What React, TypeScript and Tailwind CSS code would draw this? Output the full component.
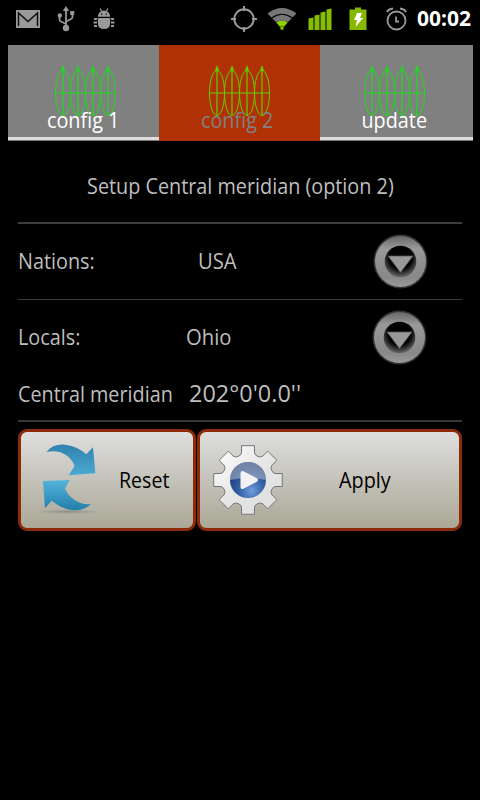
import { ReactNode } from "react";

function MailIcon() {
  return (
    <svg width="24" height="18" viewBox="0 0 24 18" className="ml-4">
      <path d="M0 0h24v18H0z" fill="#999" />
      <path d="M2.5 16V3L12 11.5 21.5 3v13" fill="none" stroke="#111" strokeWidth="1.5" />
    </svg>
  );
}

function UsbIcon() {
  return (
    <svg width="18" height="26" viewBox="0 0 18 26" className="ml-[17px]" fill="none" stroke="#999" strokeWidth="1.8">
      <path d="M9 22V3M9 18l-5-2.500q-1.500-.8-1.500-2V10M9 15.500l5-2.500q1.500-.8 1.500-2V8" />
      <path d="M9 0l3.200 5H5.800z" fill="#999" stroke="none" />
      <circle cx="9" cy="22" r="3.200" fill="#999" stroke="none" />
      <circle cx="2.800" cy="9.500" r="2.200" fill="#999" stroke="none" />
      <path d="M13.200 5h4v4h-4z" fill="#999" stroke="none" />
    </svg>
  );
}

function BugIcon() {
  return (
    <svg width="22" height="22" viewBox="0 0 22 22" className="ml-[18px]" fill="#999">
      <path d="M4.800 8.800a6.200 6.300 0 0 1 12.400 0zM4.800 10h12.400v5q0 6-6.200 6t-6.200-6z" />
      <path d="M7 .5l2 3.500M15 .5l-2 3.500" stroke="#999" strokeWidth="1.200" />
      <path d="M4 11H1M4 14.500H.5M4 18H1M18 11h3M18 14.500h3.500M18 18h3" stroke="#999" strokeWidth="2" />
      <path d="M8 5.500h1.300v1.300H8zM12.700 5.500H14v1.300h-1.300z" fill="#000" />
    </svg>
  );
}

function GpsIcon() {
  return (
    <svg width="26" height="26" viewBox="0 0 26 26" fill="none" stroke="#999" strokeWidth="2">
      <circle cx="13" cy="13" r="9.7" />
      <path d="M13 0v5M13 21v5M0 13h5M21 13h5" />
    </svg>
  );
}

function WifiIcon() {
  return (
    <svg width="30" height="24" viewBox="0 0 30 24" className="ml-[10px]">
      <path d="M.5 6.500Q15-4.500 29.500 6.500L25.500 10.500Q15 3 4.500 10.500z" fill="#777" />
      <path d="M5.200 11.300Q15 4.300 24.800 11.300L20.800 15.300Q15 11.500 9.200 15.300z" fill="#777" />
      <path d="M9.300 15.500Q15 11.500 20.700 15.500L16 21h-2z" fill="#8fd000" />
      <circle cx="15" cy="21" r="1.900" fill="#8fd000" stroke="#345000" strokeWidth=".8" />
    </svg>
  );
}

function SignalIcon() {
  return (
    <svg width="26" height="24" viewBox="0 0 26 24" className="ml-[10px]" fill="#85bd00">
      <path d="M1.500 11.500l5-1V23h-5zM7.500 8.500l5-1V23h-5zM13.500 5.500l5-1V23h-5zM19.500 2.500l5-1V23h-5z" />
    </svg>
  );
}

function BatteryIcon() {
  return (
    <svg width="18" height="24" viewBox="0 0 18 24" className="ml-4">
      <path d="M.5 2.500H6V.5h6v2h5.500V23H.5z" fill="#86b800" />
      <path d="M8 6h5l-2 5h3L6.500 20l1.500-7H5z" fill="#fff" />
    </svg>
  );
}

function AlarmIcon() {
  return (
    <svg width="22" height="24" viewBox="0 0 22 24" className="ml-[19px]" fill="none" stroke="#999" strokeWidth="1.800">
      <circle cx="10.500" cy="13.500" r="9" />
      <path d="M.8 5Q2.500 2 7 1.500M20.200 5Q18.500 2 14 1.500M10 9.500v5h3" />
    </svg>
  );
}

function MeridianIcon({ color }: { color: string }) {
  return (
    <svg width="64" height="54" viewBox="0 0 64 54" fill="none" stroke={color} strokeWidth="1" className="shrink-0">
      {[9, 24, 39, 54].map((x) => (
        <g key={x}>
          <ellipse cx={x} cy="29" rx="7.500" ry="22.500" />
          <path d={`M${x} 4v47`} strokeWidth="1.200" />
          <path d={`M${x} 1l2.200 6h-4.400z`} fill={color} stroke="none" />
        </g>
      ))}
      <path d="M1 29h61" strokeWidth="1.200" />
    </svg>
  );
}

type TabProps = { label: string; width: string; iconClass: string; labelClass: string; active?: boolean };

function Tab({ label, width, iconClass, labelClass, active }: TabProps) {
  return (
    <div
      className={`${width} h-24 shrink-0 flex flex-col items-center pt-[19px] ${
        active ? "bg-[#b13106] text-[#808080]" : "bg-[#808080] text-white"
      }`}
    >
      <div className={iconClass}>
        <MeridianIcon color={active ? "#5fd000" : "#1bdc1b"} />
      </div>
      <span className={`${labelClass} mt-[-12px] h-7 text-[22.5px] leading-7 scale-x-88 relative`}>{label}</span>
      <div className={`mt-auto w-full h-1 ${active ? "" : "bg-[#dedede] border-b border-[#777]"}`} />
    </div>
  );
}

function DropButton({ id, className }: { id: string; className: string }) {
  return (
    <button className={className} aria-label={id}>
      <svg width="56" height="56" viewBox="0 0 56 56" className="block">
        <defs>
          <linearGradient id={id} x1="0" y1="0" x2="0" y2="1">
            <stop offset="0" stopColor="#666" />
            <stop offset=".25" stopColor="#999" />
            <stop offset=".8" stopColor="#888" />
            <stop offset="1" stopColor="#999" />
          </linearGradient>
          <radialGradient id={`${id}-in`} cx=".5" cy=".38" r=".65">
            <stop offset=".55" stopColor="#000" />
            <stop offset="1" stopColor="#777" />
          </radialGradient>
        </defs>
        <circle cx="27.500" cy="27.500" r="27" fill="#333" />
        <circle cx="27.500" cy="27.500" r="25.500" fill={`url(#${id})`} />
        <circle cx="27.500" cy="27.500" r="15.800" fill={`url(#${id}-in)`} />
        <path d="M15 22h25L27.500 38.500z" fill="#999" stroke="#555" strokeWidth=".8" />
      </svg>
    </button>
  );
}

function ResetIcon() {
  return (
    <svg width="66" height="76" viewBox="75 67 198 228" className="shrink-0">
      <defs>
        <linearGradient id="arrow-a" x1="0" y1="0" x2="0" y2="1">
          <stop offset="0" stopColor="#2f83ad" />
          <stop offset="1" stopColor="#4ba9d4" />
        </linearGradient>
        <linearGradient id="arrow-b" x1="0" y1="0" x2="0" y2="1">
          <stop offset="0" stopColor="#55b3dc" />
          <stop offset="1" stopColor="#237fa9" />
        </linearGradient>
        <radialGradient id="arrow-shadow">
          <stop offset="0" stopColor="#777" stopOpacity=".6" />
          <stop offset="1" stopColor="#777" stopOpacity="0" />
        </radialGradient>
      </defs>
      <ellipse cx="174" cy="276" rx="99" ry="7" fill="url(#arrow-shadow)" />
      <path d="M110 97Q128 72 166 75Q204 80 229 104L249 83L256 161L176 167L194 139C182 108 150 88 110 97z" fill="url(#arrow-a)" />
      <path d="M99 184L179 181L165 207C176 234 210 258 243 253Q222 275 184 271Q151 265 125 243L105 266z" fill="url(#arrow-b)" />
    </svg>
  );
}

// one tooth of the gear, repeated every 45 degrees
const TOOTH = [[-8, -24.5], [-6.5, -27], [-6.5, -34.3], [6.5, -34.3], [6.5, -27], [8, -24.5]];
const GEAR = Array.from({ length: 8 }, (_, i) => {
  const a = (i * Math.PI) / 4;
  return TOOTH.map(([x, y]) => `${x * Math.cos(a) - y * Math.sin(a)},${x * Math.sin(a) + y * Math.cos(a)}`).join(" ");
}).join(" ");

function GearIcon() {
  return (
    <svg width="72" height="72" viewBox="-36 -36 72 72" className="shrink-0">
      <defs>
        <linearGradient id="gear" x1="0" y1="0" x2="1" y2="1">
          <stop offset="0" stopColor="#fff" />
          <stop offset=".5" stopColor="#e6e6e6" />
          <stop offset="1" stopColor="#ddd" />
        </linearGradient>
        <radialGradient id="ball" cx=".6" cy=".8" r=".7">
          <stop offset="0" stopColor="#6f9ddd" />
          <stop offset=".5" stopColor="#3560a5" />
          <stop offset="1" stopColor="#1d3f7c" />
        </radialGradient>
      </defs>
      <polygon points={GEAR} fill="url(#gear)" stroke="#777" strokeWidth="1" strokeLinejoin="round" />
      <circle r="18" fill="url(#ball)" />
      <path d="M-18 0A18 18 0 0 1 18 0Q0 -4 -18 0z" fill="#c5cbd6" opacity=".5" />
      <path d="M-5.500-7L8 0L-5.500 7z" fill="#f2f2f2" stroke="#f2f2f2" strokeWidth="4" strokeLinejoin="round" />
    </svg>
  );
}

function ActionButton({ className, children }: { className: string; children: ReactNode }) {
  return (
    <button
      className={`${className} h-[102px] flex items-center rounded-[9px] border-3 border-[#8c2a0a] bg-linear-to-b from-[#dedede] to-[#aba897] text-[22px] text-black`}
    >
      {children}
    </button>
  );
}

export default function App() {
  return (
    <div className="w-[480px] h-[800px] overflow-hidden bg-black text-[#bebebe] text-[22px] whitespace-nowrap font-['Open_Sans','Noto_Sans',sans-serif]">
      <header className="h-[38px] flex items-center">
        <MailIcon />
        <UsbIcon />
        <BugIcon />
        <div className="ml-auto flex items-center pr-[9px]">
          <GpsIcon />
          <WifiIcon />
          <SignalIcon />
          <BatteryIcon />
          <AlarmIcon />
          <span className="ml-[9px] w-[54px] text-[21px] font-bold text-white">00:02</span>
        </div>
      </header>

      <nav className="mt-[7px] ml-2 flex">
        <Tab label="config 1" width="w-[151px]" iconClass="ml-[5px]" labelClass="" />
        <Tab label="config 2" width="w-[161px]" iconClass="ml-[1px]" labelClass="mr-1" active />
        <Tab label="update" width="w-[153px]" iconClass="mr-[3px]" labelClass="mr-1" />
      </nav>

      <main className="mx-[18px]">
        <h1 className="h-[81px] pt-[28px] flex justify-center leading-8">
          <span className="scale-x-90">Setup Central meridian (option 2)</span>
        </h1>
        <div className="h-0.5 bg-[#3d3d3d]" />

        <div className="h-[75px] flex items-center">
          <span className="w-[180px] pb-0.5"><span className="inline-block origin-left scale-x-90">Nations:</span></span>
          <span className="inline-block pb-0.5 origin-left scale-x-92">USA</span>
          <DropButton id="nations" className="ml-auto mr-[33px]" />
        </div>
        <div className="h-px bg-[#3d3d3d]" />

        <div className="h-[76px] flex items-center">
          <span className="w-[168px] pb-[3px]"><span className="inline-block origin-left scale-x-90">Locals:</span></span>
          <span className="inline-block pb-[3px] origin-left scale-x-92">Ohio</span>
          <DropButton id="locals" className="ml-auto mr-[34px]" />
        </div>
        <div className="h-11 flex items-start leading-[34px]">
          <span className="w-[171px]"><span className="inline-block origin-left scale-x-90">Central meridian</span></span>
          <span className="inline-block origin-left text-[23px] scale-x-102">202°0'0.0''</span>
        </div>
        <div className="h-0.5 bg-[#343b34]" />

        <div className="mt-[7px] flex gap-px">
          <ActionButton className="w-[178px] pl-[14px]">
            <ResetIcon />
            <span className="ml-[18px] pb-0.5 origin-left scale-x-89">Reset</span>
          </ActionButton>
          <ActionButton className="w-[265px] pl-3">
            <GearIcon />
            <span className="ml-[55px] pb-0.5 origin-left scale-x-90">Apply</span>
          </ActionButton>
        </div>
      </main>
    </div>
  );
}
